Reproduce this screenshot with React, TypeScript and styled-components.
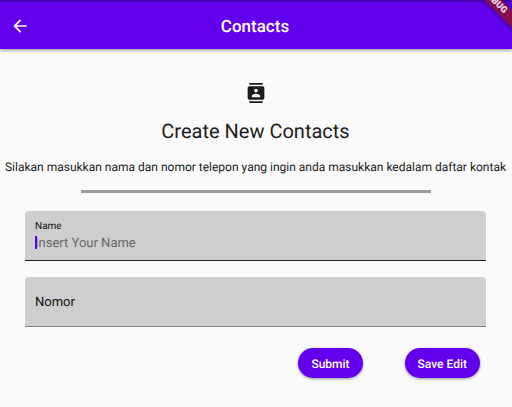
import React, { useState } from "react";
import styled, { createGlobalStyle } from "styled-components";
import { MdArrowBack, MdContacts } from "react-icons/md";

const GlobalStyle = createGlobalStyle`
  *, *::before, *::after { box-sizing: border-box; }
  body {
    margin: 0;
    background: #fafafa;
    color: #1c1c1c;
    font-family: Roboto, "Liberation Sans", sans-serif;
    text-rendering: geometricPrecision;
    overflow-x: hidden;
  }
`;

const AppBar = styled.header`
  position: relative;
  display: grid;
  grid-template-columns: 40px 1fr 42px;
  align-items: center;
  height: 49px;
  border-top: 2px solid #4b00b5;
  background: #6200ee;
  color: #fff;
  box-shadow: 0 1px 4px rgba(0, 0, 0, 0.45);
`;

const BackButton = styled.button`
  display: flex;
  justify-content: center;
  align-items: center;
  width: 40px;
  height: 40px;
  padding: 0;
  border: 0;
  background: none;
  color: inherit;
`;

const BarTitle = styled.h1`
  margin: 0;
  padding-top: 2px;
  font-size: 17px;
  line-height: 24px;
  font-weight: 500;
  text-align: center;
`;

const BannerCorner = styled.div`
  position: absolute;
  top: -2px;
  right: 0;
  width: 48px;
  height: 48px;
  overflow: hidden;
  pointer-events: none;
`;

const Banner = styled.span`
  position: absolute;
  top: -4px;
  right: -23px;
  width: 80px;
  height: 12px;
  transform: rotate(45deg);
  background: #890e4f;
  box-shadow: 0 0 6px rgba(0, 0, 0, 0.5);
  color: #f5dfe9;
  font-size: 9px;
  line-height: 12px;
  font-weight: 900;
  text-align: center;
`;

const Page = styled.main`
  display: flex;
  flex-direction: column;
  align-items: center;
  padding: 34px 1px 24px 0;
`;

const Heading = styled.h2`
  margin: 15px 0 0;
  font-size: 20px;
  line-height: 26px;
  font-weight: 400;
`;

const Lead = styled.p`
  margin: 15px 0 0;
  font-size: 12px;
  line-height: 16px;
  text-align: center;
`;

const Rule = styled.hr`
  width: calc(100% - 161px);
  height: 3px;
  margin: 15px 0 0;
  border: 0;
  background: #9c9c9c;
`;

const Form = styled.form`
  display: flex;
  flex-direction: column;
  gap: 16px;
  width: 100%;
  margin-top: 18px;
  padding: 0 25px;
`;

const Field = styled.div<{ $active?: boolean }>`
  position: relative;
  display: flex;
  flex-direction: column;
  justify-content: center;
  height: 50px;
  padding: 2px 10px 0;
  border-radius: 4px 4px 0 0;
  border-bottom: 1px solid ${(p) => (p.$active ? "#1c1c1c" : "#808080")};
  background: #cecece;
`;

const FloatingLabel = styled.label`
  font-size: 10px;
  line-height: 14px;
  color: #111;
`;

const TextInput = styled.input<{ $strongHint?: boolean }>`
  width: 100%;
  height: 20px;
  padding: 0;
  border: 0;
  outline: 0;
  background: none;
  color: #111;
  font-family: inherit;
  font-size: 13px;
  line-height: 20px;
  text-rendering: inherit;

  &::placeholder {
    color: ${(p) => (p.$strongHint ? "#111" : "#666")};
    opacity: 1;
  }
`;

const Caret = styled.span`
  position: absolute;
  left: 10px;
  bottom: 11px;
  width: 2px;
  height: 13px;
  background: #6200ee;
`;

const Actions = styled.div`
  display: flex;
  justify-content: flex-end;
  gap: 42px;
  padding: 5px 6px 0 0;
`;

const PillButton = styled.button`
  height: 30px;
  padding: 2px 13px 0;
  border: 0;
  border-radius: 15px;
  background: #6200ee;
  color: #fff;
  box-shadow: 0 1px 3px rgba(0, 0, 0, 0.4);
  font-family: inherit;
  font-size: 12px;
  line-height: 16px;
  font-weight: 500;
  text-rendering: inherit;
`;

export default function App() {
  const [name, setName] = useState("");
  const [phone, setPhone] = useState("");

  return (
    <>
      <GlobalStyle />
      <AppBar>
        <BackButton type="button" aria-label="Back">
          <MdArrowBack size={20} />
        </BackButton>
        <BarTitle>Contacts</BarTitle>
        <BannerCorner>
          <Banner>DEBUG</Banner>
        </BannerCorner>
      </AppBar>
      <Page>
        <MdContacts size={20} aria-hidden />
        <Heading>Create New Contacts</Heading>
        <Lead>
          Silakan masukkan nama dan nomor telepon yang ingin anda masukkan
          kedalam daftar kontak
        </Lead>
        <Rule />
        <Form onSubmit={(e) => e.preventDefault()}>
          <Field $active>
            <FloatingLabel htmlFor="name">Name</FloatingLabel>
            <TextInput
              id="name"
              placeholder="Insert Your Name"
              value={name}
              onChange={(e) => setName(e.target.value)}
            />
            {name === "" && <Caret />}
          </Field>
          <Field>
            <TextInput
              $strongHint
              aria-label="Nomor"
              type="tel"
              placeholder="Nomor"
              value={phone}
              onChange={(e) => setPhone(e.target.value)}
            />
          </Field>
          <Actions>
            <PillButton type="submit">Submit</PillButton>
            <PillButton type="button">Save Edit</PillButton>
          </Actions>
        </Form>
      </Page>
    </>
  );
}
